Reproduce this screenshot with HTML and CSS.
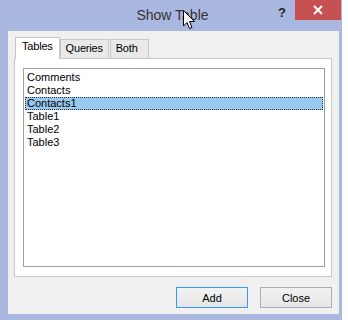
FILE: index.html
```html
<!DOCTYPE html>
<html lang="en">
<head>
    <meta charset="UTF-8">
    <title>Show Table</title>
    <link rel="stylesheet" href="styles.css">
</head>
<body>
    <div class="window">
        <div class="titlebar">
            <div></div>
            <div class="title">Show Table</div>
            <div class="controls">
                <span class="help">?</span>
                <span class="close">
                    <svg width="10" height="10" viewBox="0 0 10 10">
                        <path d="M1 1 L9 9 M9 1 L1 9" stroke="#fff" stroke-width="2"/>
                    </svg>
                </span>
            </div>
            <svg class="cursor" width="13" height="20" viewBox="0 0 13 20">
                <path d="M0.5 0.5 L0.5 16 L4 12.5 L6.5 18.5 L9 17.5 L6.5 11.5 L11.5 11.5 Z" fill="#fff" stroke="#000" stroke-width="1"/>
            </svg>
        </div>

        <div class="client">
            <div class="tabs">
                <div class="tab active">Tables</div>
                <div class="tab">Queries</div>
                <div class="tab both">Both</div>
            </div>
            <div class="panel">
                <div class="listbox">
                    <div class="item">Comments</div>
                    <div class="item">Contacts</div>
                    <div class="item selected">Contacts1</div>
                    <div class="item">Table1</div>
                    <div class="item">Table2</div>
                    <div class="item">Table3</div>
                </div>
            </div>
            <div class="buttons">
                <button class="btn default">Add</button>
                <button class="btn">Close</button>
            </div>
        </div>
    </div>
</body>
</html>
```

FILE: styles.css
```css
body {
    margin: 0;
    padding: 0;
    background: #fff;
    font-family: 'Liberation Sans', Arial, sans-serif;
}

.window {
    width: 342px;
    height: 320px;
    background: #aab8e1;
    box-sizing: border-box;
    display: flex;
    flex-direction: column;
}

.titlebar {
    position: relative;
    height: 31px;
    display: grid;
    grid-template-columns: 1fr auto 1fr;
    align-items: start;
}

.title {
    font-size: 14px;
    color: #333;
    padding: 7px 0 0 3px;
}

.controls {
    justify-self: end;
    display: flex;
    align-items: flex-start;
    margin-right: 1px;
}

.help {
    font-weight: bold;
    font-size: 13px;
    color: #222;
    margin: 5px 9px 0 0;
}

.close {
    width: 46px;
    height: 20px;
    background: #c75050;
    display: flex;
    align-items: center;
    justify-content: center;
}

.cursor {
    position: absolute;
    left: 183px;
    top: 10px;
}

.client {
    margin: 0 3px 0 8px;
    height: 283px;
    background: #f0f0f0;
    padding: 6px 7px 0 6px;
    box-sizing: border-box;
}

.tabs {
    display: flex;
    align-items: flex-end;
    height: 21px;
    padding-left: 1px;
}

.tab {
    font-size: 11px;
    letter-spacing: -0.2px;
    color: #000;
    border: 1px solid #c8c8c8;
    border-bottom: none;
    padding: 2px 5px 0 5px;
    height: 16px;
    margin-right: 1px;
    background: #e9e9e9;
}

.tab.both {
    padding: 2px 10px 0 5px;
}

.tab.active {
    height: 19px;
    background: #fff;
    margin-bottom: -1px;
    margin-right: 0;
    position: relative;
    z-index: 1;
    padding: 2px 6px 0 6px;
}

.panel {
    background: #fff;
    border: 1px solid #c8c8c8;
    height: 219px;
    box-sizing: border-box;
    padding: 9px 6px 9px 8px;
}

.listbox {
    border: 1px solid #a0a0a0;
    height: 100%;
    box-sizing: border-box;
    padding: 2px 1px;
}

.item {
    font-size: 11px;
    line-height: 13px;
    height: 13px;
    padding-left: 2px;
    color: #000;
}

.item.selected {
    background: #99c9ef;
    outline: 1px dotted #333;
    outline-offset: -1px;
}

.buttons {
    display: flex;
    justify-content: flex-end;
    gap: 12px;
    padding-top: 10px;
}

.btn {
    width: 72px;
    height: 21px;
    font-family: 'Liberation Sans', Arial, sans-serif;
    font-size: 11px;
    color: #000;
    background: linear-gradient(#f2f2f2, #e5e5e5);
    border: 1px solid #acacac;
    padding: 0;
}

.btn.default {
    border-color: #3399ff;
}
```
